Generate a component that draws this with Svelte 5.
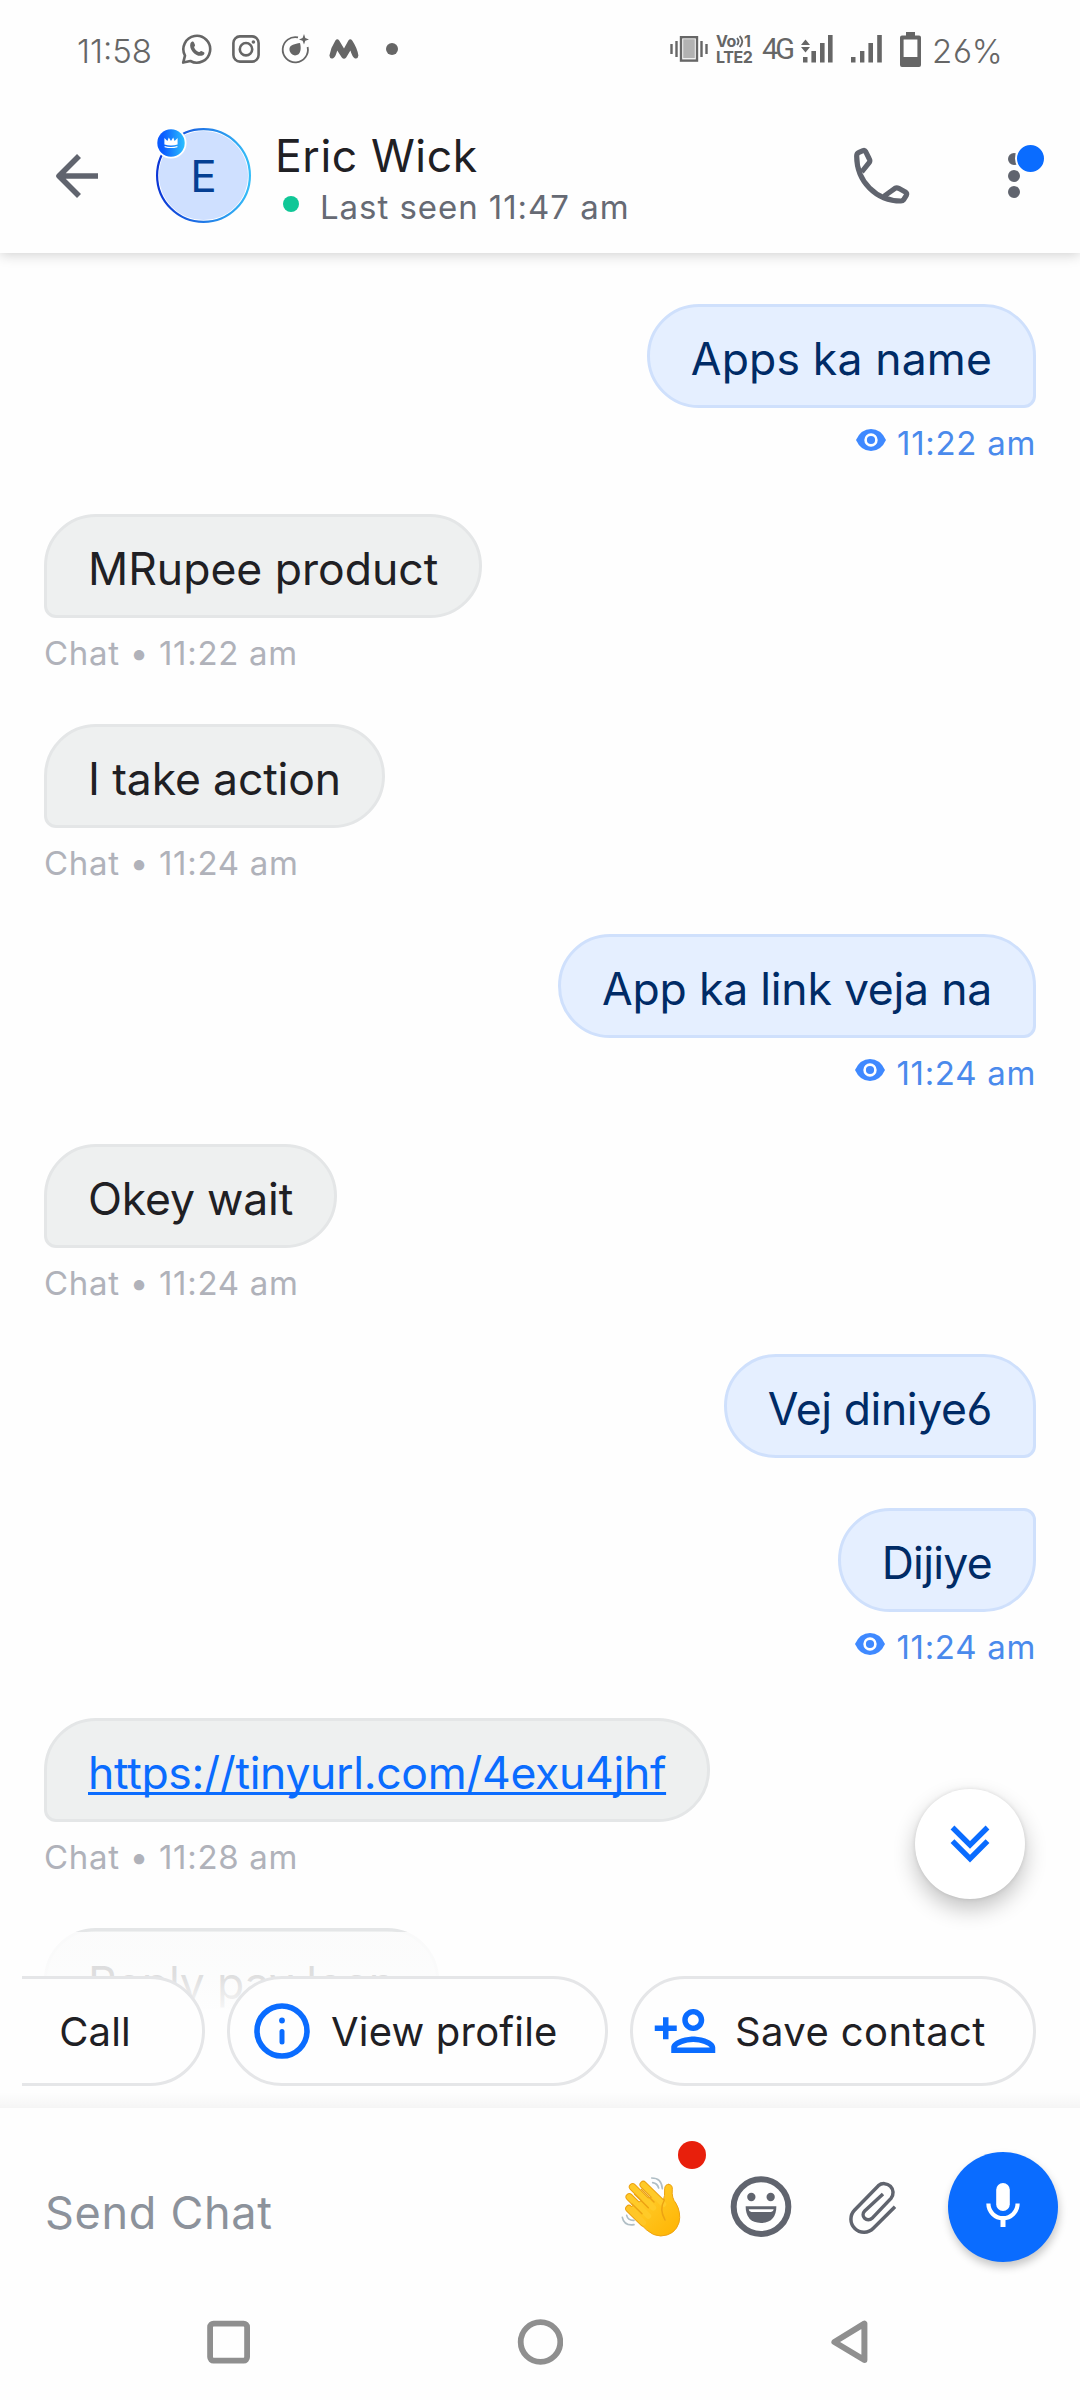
<script>
  let draft = '';

  // tracking is the letter spacing of the bubble text, in px
  const messages = [
    { id: 1, side: 'out', text: 'Apps ka name', time: '11:22 am', tracking: 0.15 },
    { id: 2, side: 'in', text: 'MRupee product', time: '11:22 am', tracking: 0 },
    { id: 3, side: 'in', text: 'I take action', time: '11:24 am', tracking: -0.15 },
    { id: 4, side: 'out', text: 'App ka link veja na', time: '11:24 am', tracking: -0.22 },
    { id: 5, side: 'in', text: 'Okey wait', time: '11:24 am', tracking: -0.2 },
    { id: 6, side: 'out', text: 'Vej diniye6', tracking: -0.4 },
    { id: 7, side: 'out', text: 'Dijiye', time: '11:24 am', grouped: true, tracking: -0.7 },
    { id: 8, side: 'in', text: 'https://tinyurl.com/4exu4jhf', time: '11:28 am', link: true, tracking: -0.32 },
    { id: 9, side: 'in', text: 'Reply pay loan', tracking: -0.1 }
  ];
</script>

<div class="screen">
  <div class="status">
    <span class="clock">11:58</span>
    <svg class="st-whatsapp" width="32" height="32" viewBox="0 0 32 32" fill="none" stroke="#666" stroke-width="2.6">
      <path d="M2.2 29.6 L4 22.6 A13.4 13.4 0 1 1 9.4 28 Z" stroke-linejoin="round" />
      <path d="M9.4 10.4 C10.5 8.4 12.2 8 13 9.4 L14 12 C14.4 13 12.8 13.8 13.2 14.6 C14 16.6 15.6 18.2 17.8 19 C18.8 19.4 19.4 17.6 20.4 18 L23 19.2 C24.2 20 23 22 21.4 22.6 C15 24.4 7.6 16.4 9.4 10.4 Z" fill="#666" stroke="none" />
    </svg>
    <svg class="st-insta" width="28" height="28" viewBox="0 0 28 28" fill="none" stroke="#666" stroke-width="2.6">
      <rect x="1.4" y="1.4" width="25.2" height="25.2" rx="6.5" />
      <circle cx="14" cy="14.2" r="6.2" />
      <circle cx="21.4" cy="7" r="1.8" fill="#666" stroke="none" />
    </svg>
    <svg class="st-drop" width="29" height="30" viewBox="0 0 29 30" fill="none">
      <path d="M17 3.4 A12.6 12.6 0 1 0 26.6 13" stroke="#666" stroke-width="1.8" />
      <path d="M19 9 C20.4 14 20.2 21.4 14 21.4 A6 6 0 0 1 8.4 15 C8.8 10.6 14 10 19 9 Z" fill="#666" />
      <path d="M23 0 L24.3 4 L28 5.4 L24.3 6.8 L23 10.6 L21.6 6.8 L18 5.4 L21.6 4 Z" fill="#666" />
    </svg>
    <svg class="st-m" width="30" height="20" viewBox="0 0 30 20">
      <path d="M6.4 1.6 Q8.2 -1 10.2 1.4 L15 9.4 L19.4 1.4 Q21.4 -1 23.2 1.6 Q28.2 9 29.4 16.6 Q29 20.4 25.6 19.2 Q23.4 18 21.4 11.4 L17.2 18.4 Q15 21 12.8 18.4 L8.2 11.4 Q6.6 18 4.2 19.2 Q0.8 20.4 0.4 16.6 Q1.6 9 6.4 1.6 Z" fill="#666" />
    </svg>
    <span class="st-dot"></span>
    <span class="spacer"></span>
    <svg class="st-vibrate" width="38" height="26" viewBox="0 0 38 26" fill="none" stroke="#666">
      <rect x="11.2" y="1.2" width="15.6" height="23" fill="#b2b2b2" stroke="#fff" stroke-width="4" />
      <rect x="11" y="1.2" width="16" height="23.4" stroke-width="2.4" />
      <path d="M1.5 8 V18 M6.5 5 V21 M31.5 5 V21 M36.5 8 V18" stroke-width="2.4" />
    </svg>
    <span class="volte"><span class="vo">Vo<svg width="8" height="13" viewBox="0 0 8 13" fill="none" stroke="#666" stroke-width="1.8"><path d="M1 3 Q4 6.5 1 10 M3.6 1 Q9 6.5 3.6 12" /></svg>1</span><span>LTE2</span></span>
    <span class="net">4G</span>
    <svg class="st-signal" width="32" height="28" viewBox="0 0 32 28" fill="#666">
      <path d="M0 10 L4.5 4.6 L9 10 Z M0 12 H9 L4.5 17.4 Z" />
      <path d="M2 22 H6.5 V27.4 H2 Z M10.4 16 H15 V27.4 H10.4 Z M19 8 H23.6 V27.4 H19 Z M27 0 H31.6 V27.4 H27 Z" />
    </svg>
    <svg class="st-signal2" width="31" height="28" viewBox="0 0 31 28" fill="#666">
      <path d="M0 22 H4.5 V27.4 H0 Z M9 16 H13.4 V27.4 H9 Z M17.4 8 H22 V27.4 H17.4 Z M26.2 0 H30.8 V27.4 H26.2 Z" />
    </svg>
    <svg class="st-battery" width="21" height="35" viewBox="0 0 21 35">
      <path fill="#666" fill-rule="evenodd" d="M6 0 H15 V3.4 H19 Q21 3.4 21 5.4 V33 Q21 35 19 35 H2 Q0 35 0 33 V5.4 Q0 3.4 2 3.4 H6 Z M3.6 7.4 V25 H17.4 V7.4 Z" />
    </svg>
    <span class="percent">26%</span>
  </div>

  <header>
    <svg class="back" width="46" height="46" viewBox="0 0 46 46" fill="none" stroke="#60646e" stroke-width="5.6">
      <path d="M25 3 L5 23 L25 43 M5 23 H44" stroke-linejoin="round" />
    </svg>
    <div class="avatar">
      <svg width="95" height="95" viewBox="0 0 95 95">
        <defs>
          <linearGradient id="ring" x1="0" y1="0" x2="1" y2="0">
            <stop offset="0" stop-color="#0a35d6" />
            <stop offset="1" stop-color="#36bdf8" />
          </linearGradient>
        </defs>
        <circle cx="47.5" cy="47.5" r="46.4" fill="#fff" stroke="url(#ring)" stroke-width="2.2" />
        <circle cx="47.5" cy="47.5" r="44.6" fill="#cfe0ff" />
      </svg>
      <span class="initial">E</span>
      <svg class="crown" width="32" height="32" viewBox="0 0 32 32">
        <defs>
          <linearGradient id="crown" x1="0" y1="0" x2="1" y2="0">
            <stop offset="0.2" stop-color="#0a5bff" />
            <stop offset="1" stop-color="#2bc0ff" />
          </linearGradient>
        </defs>
        <circle cx="16" cy="16" r="15.5" fill="#fff" />
        <circle cx="16" cy="16" r="13.7" fill="url(#crown)" />
        <path d="M9.4 11 L12.4 14 L13.8 10.4 L16 14 L18.2 10.4 L19.6 14 L22.6 11 V17.6 Q16 19.4 9.4 17.6 Z M9.6 19 Q16 20.8 22.4 19 V20.2 Q16 22 9.6 20.2 Z" fill="#fff" />
      </svg>
    </div>
    <div class="who">
      <div class="name">Eric Wick</div>
      <div class="seen"><span class="online"></span>Last seen 11:47 am</div>
    </div>
    <svg class="call" width="58" height="58" viewBox="160 141 174 174" fill="none" stroke="#60646e" stroke-width="15.5" stroke-linejoin="round">
      <path d="M171 168 Q171 160 178 157 L190 152 Q195 150 198 155 L209 177 Q212 182 209 187 L186 216" />
      <path d="M171 168 C171 245 230 303 304 303 Q309 303 312 299 L320 286 Q323 280 317 276 L297 265 Q291 262 286 265 L254 288" />
    </svg>
    <div class="more">
      <span></span><span></span><span></span>
      <i class="new"></i>
    </div>
  </header>

  <main>
    {#each messages as message (message.id)}
      <div class="message {message.side}">
        <div class="bubble" class:grouped={message.grouped} style="letter-spacing: {message.tracking}px">
          {#if message.link}
            <a href={message.text}>{message.text}</a>
          {:else}
            {message.text}
          {/if}
        </div>
        {#if message.time}
          <div class="meta">
            {#if message.side === 'out'}
              <svg width="30" height="22" viewBox="0 0 30 22">
                <path d="M0 11 Q5 0 15 0 Q25 0 30 11 Q25 22 15 22 Q5 22 0 11 Z" fill="#3f89ff" />
                <circle cx="15" cy="11" r="5.4" fill="none" stroke="#fff" stroke-width="2.6" />
              </svg>
              <span>{message.time}</span>
            {:else}
              <span>Chat • {message.time}</span>
            {/if}
          </div>
        {/if}
      </div>
    {/each}

    <div class="fade"></div>

    <button class="jump" aria-label="Scroll to latest">
      <svg width="40" height="40" viewBox="0 0 40 40" fill="none" stroke="#0a6cff" stroke-width="5.4">
        <path d="M2.5 3.5 L20 21 L37.5 3.5 M2.5 17.2 L20 34.7 L37.5 17.2" />
      </svg>
    </button>

    <div class="chips">
      <button class="chip chip-call">Call</button>
      <button class="chip chip-view">
        <svg width="56" height="56" viewBox="0 0 56 56" fill="none" stroke="#0a6cff">
          <circle cx="28" cy="28" r="25" stroke-width="5.6" />
          <path d="M28 28.5 V39" stroke-width="5" stroke-linecap="round" />
          <circle cx="28" cy="17.5" r="2.9" fill="#0a6cff" stroke="none" />
        </svg>
        View profile
      </button>
      <button class="chip chip-save">
        <svg width="66" height="66" viewBox="0 0 24 24" fill="#0a6cff">
          <path d="M15 12c2.21 0 4-1.79 4-4s-1.79-4-4-4-4 1.79-4 4 1.79 4 4 4zm0-6c1.1 0 2 .9 2 2s-.9 2-2 2-2-.9-2-2 .9-2 2-2zm0 8c-2.67 0-8 1.34-8 4v2h16v-2c0-2.66-5.33-4-8-4zm-6 4c.22-.72 3.31-2 6-2 2.7 0 5.8 1.29 6 2H9zm-3-3v-3h3v-2H6V7H4v3H1v2h3v3z" />
        </svg>
        Save contact
      </button>
    </div>
    <div class="edge"></div>
  </main>

  <footer>
    <input bind:value={draft} placeholder="Send Chat" />
    <div class="wave">
      <svg width="60" height="62" viewBox="63 230 180 186" fill="none" stroke-linecap="round">
        <defs>
          <linearGradient id="skin" x1="0" y1="0" x2="1" y2="1">
            <stop offset="0.3" stop-color="#ffca28" />
            <stop offset="1" stop-color="#ffb300" />
          </linearGradient>
        </defs>
        <path d="M98 263 L160 325 M88 293 L145 350 M87 328 L130 370 M130 256 L190 315" stroke="#eda313" stroke-width="23" />
        <path d="M206 255 Q218 256 217 270 Q214 296 228 312 Q244 340 237 370 Q225 408 182 410 Q160 410 140 392 L78 332 L130 300 L165 290 L190 302 Q195 292 194 268 Q195 255 206 255 Z" fill="url(#skin)" stroke="#eda313" stroke-width="3" />
        <path d="M130 256 L190 315" stroke="#ffca28" stroke-width="17" />
        <path d="M98 263 L160 325" stroke="#ffca28" stroke-width="17" />
        <path d="M88 293 L145 350" stroke="#ffca28" stroke-width="17" />
        <path d="M87 328 L130 370" stroke="#ffc628" stroke-width="17" />
        <path d="M124 270 L162 308 M104 285 L145 325 M96 314 L126 343" stroke="#eda313" stroke-width="4.5" />
        <path d="M193 302 Q177 330 195 362" stroke="#eda313" stroke-width="4.5" />
        <path d="M155 236 Q185 236 187 268 M158 250 Q172 252 176 266 M67 354 Q72 380 102 376 M80 348 Q84 364 102 363" stroke="#b0bec5" stroke-width="5" />
      </svg>
      <i class="alert"></i>
    </div>
    <svg class="smile" width="62" height="62" viewBox="390 229 186 186">
      <circle cx="483" cy="321" r="82" fill="none" stroke="#60646e" stroke-width="18" />
      <circle cx="454" cy="292" r="12.5" fill="#60646e" />
      <circle cx="512" cy="292" r="12.5" fill="#60646e" />
      <path d="M437 320 H529 Q529 369 483 370 Q437 369 437 320 Z" fill="#60646e" />
      <path d="M446 329 H521 Q520 337 513 337 H454 Q447 337 446 329 Z" fill="#fff" />
    </svg>
    <svg class="clip" width="52" height="57" viewBox="740 235 156 171" fill="none" stroke="#60646e" stroke-width="10.5">
      <path d="M884 318 L819 383 A39 39 0 0 1 763 328 L834 255 A27 27 0 0 1 872 293 L815 353 A15.5 15.5 0 0 1 793 331 L848 280" />
    </svg>
    <button class="mic" aria-label="Record">
      <svg width="34" height="46" viewBox="0 0 34 46" fill="none" stroke="#fff" stroke-width="4.2">
        <rect x="10.2" y="1" width="13.6" height="28" rx="6.8" fill="#fff" stroke="none" />
        <path d="M2.4 21.6 A14.6 14.6 0 0 0 31.6 21.6" />
        <path d="M17 36 V45" stroke-width="5" />
      </svg>
    </button>
  </footer>

  <nav>
    <svg width="46" height="46" viewBox="0 0 46 46" fill="none" stroke="#8f8f8f" stroke-width="5.8">
      <rect x="4.1" y="4.6" width="37" height="37" rx="3.5" />
    </svg>
    <svg width="46" height="46" viewBox="0 0 46 46" fill="none" stroke="#8f8f8f" stroke-width="5.8">
      <circle cx="23.5" cy="23" r="19.8" />
    </svg>
    <svg width="46" height="46" viewBox="0 0 46 46" fill="none" stroke="#8f8f8f" stroke-width="6" stroke-linejoin="round">
      <path d="M36.4 4.6 V41 L6.4 23 Z" />
    </svg>
  </nav>
</div>

<style>
  :global(body) {
    margin: 0;
    background: #fefefe;
  }
  .screen {
    width: 1080px;
    height: 2400px;
    display: flex;
    flex-direction: column;
    overflow: hidden;
    background: #fefefe;
    font-family: Inter, 'Liberation Sans', sans-serif;
    font-weight: 400;
    font-feature-settings: 'cv03';
    color: #1f2024;
  }
  svg {
    display: block;
    flex: none;
  }
  button {
    font: inherit;
    color: inherit;
    border: none;
    padding: 0;
  }
  .status {
    height: 98px;
    display: flex;
    align-items: center;
    color: #666;
    font-size: 33px;
    font-weight: 300;
    padding: 0 79px 0 77px;
    white-space: nowrap;
  }
  .clock {
    width: 104px;
    padding-top: 4px;
  }
  .st-insta {
    margin-left: 19px;
  }
  .st-drop {
    margin-left: 21px;
  }
  .st-m {
    margin-left: 19px;
  }
  .st-dot {
    width: 12px;
    height: 12px;
    margin-left: 27px;
    border-radius: 50%;
    background: #666;
  }
  .spacer {
    flex: 1;
  }
  .st-vibrate {
    margin-right: 8px;
  }
  .volte {
    width: 38px;
    margin-right: 8px;
    display: flex;
    flex-direction: column;
    font-size: 16px;
    line-height: 16px;
    font-weight: 700;
    letter-spacing: -0.4px;
  }
  .vo {
    display: flex;
    align-items: center;
  }
  .net {
    width: 39px;
    font: 400 29px/30px Roboto, sans-serif;
    letter-spacing: -3px;
  }
  .st-signal {
    margin-right: 18px;
  }
  .st-signal2 {
    margin-right: 18px;
  }
  .st-battery {
    margin-right: 11px;
  }
  .percent {
    width: 69px;
    padding-top: 4px;
    letter-spacing: 0.8px;
  }
  header {
    position: relative;
    z-index: 2;
    height: 155px;
    display: flex;
    align-items: center;
    background: #fefefe;
    box-shadow: 0 2px 12px rgba(0, 0, 0, 0.18);
    clip-path: inset(0 0 -20px 0);
    padding-left: 54px;
  }
  .avatar {
    position: relative;
    width: 95px;
    height: 95px;
    margin-left: 56px;
  }
  .initial {
    position: absolute;
    inset: 0;
    line-height: 96px;
    text-align: center;
    font-size: 44px;
    color: #053f93;
  }
  .crown {
    position: absolute;
    left: -1px;
    top: -1px;
  }
  .who {
    flex: 1;
    margin-left: 24px;
    padding-top: 8px;
  }
  .name {
    font-size: 44.5px;
    line-height: 54px;
    letter-spacing: 0.6px;
  }
  .seen {
    display: flex;
    align-items: center;
    font-size: 33px;
    line-height: 48px;
    letter-spacing: 0.95px;
    color: #666a74;
  }
  .online {
    width: 16px;
    height: 16px;
    margin: 0 21px 6px 8px;
    border-radius: 50%;
    background: #10c797;
  }
  .more {
    position: relative;
    width: 12px;
    height: 45px;
    margin: 0 60px 0 97px;
    display: flex;
    flex-direction: column;
    justify-content: space-between;
  }
  .more span {
    width: 12px;
    height: 12px;
    border-radius: 50%;
    background: #60646e;
  }
  .new {
    position: absolute;
    left: 7px;
    top: -10px;
    width: 27px;
    height: 27px;
    border: 2.5px solid #fefefe;
    border-radius: 50%;
    background: #0a6cff;
  }
  main {
    position: relative;
    height: 1804px;
    padding: 51px 44px 0;
    display: flex;
    flex-direction: column;
    gap: 50px;
    overflow: hidden;
  }
  .message {
    flex: none;
    display: flex;
    flex-direction: column;
    align-items: flex-start;
  }
  .out {
    align-items: flex-end;
  }
  .bubble {
    box-sizing: border-box;
    height: 104px;
    padding: 6px 41px 0;
    border: 3px solid #e4e6e7;
    border-radius: 52px 52px 52px 12px;
    background: #eef0f0;
    font-size: 44.5px;
    line-height: 93px;
    white-space: nowrap;
  }
  .out .bubble {
    border-color: #cfe0fc;
    border-radius: 52px 52px 12px 52px;
    background: #e5efff;
    color: #002b66;
  }
  .out .bubble.grouped {
    border-radius: 52px 12px 52px 52px;
  }
  .bubble a {
    color: #0a6cff;
    text-decoration-thickness: 3px;
    text-underline-offset: 3px;
    text-decoration-skip-ink: none;
  }
  .meta {
    display: flex;
    gap: 11px;
    margin-top: 15px;
    height: 41px;
    font-size: 33px;
    line-height: 41px;
    letter-spacing: 0.7px;
    color: #b0b2ba;
  }
  .meta svg {
    margin-top: 6px;
  }
  .out .meta {
    color: #4a8aec;
  }
  .fade {
    position: absolute;
    left: 0;
    right: 0;
    top: 1679px;
    bottom: 0;
    background: linear-gradient(rgba(254, 254, 254, 0.82), rgba(254, 254, 254, 0.86) 44px, rgba(254, 254, 254, 0.96) 76px, #fefefe 77px);
  }
  .jump {
    position: absolute;
    left: 915px;
    top: 1536px;
    width: 110px;
    height: 110px;
    display: flex;
    align-items: center;
    justify-content: center;
    border-radius: 50%;
    background: #fff;
    box-shadow: 0 10px 22px rgba(0, 0, 0, 0.24), 0 0 4px rgba(0, 0, 0, 0.1);
  }
  .chips {
    position: absolute;
    left: 22px;
    right: 44px;
    bottom: 22px;
    display: flex;
    justify-content: flex-end;
    gap: 22px;
    overflow: hidden;
  }
  .chip {
    box-sizing: border-box;
    flex: none;
    height: 110px;
    display: flex;
    align-items: center;
    border: 3px solid #e5e6e8;
    border-radius: 55px;
    background: #fefefe;
    font-size: 40px;
    letter-spacing: 0.2px;
    white-space: nowrap;
  }
  .chip-call {
    width: 290px;
    justify-content: flex-end;
    padding-right: 71px;
  }
  .chip-view {
    width: 381px;
    padding-left: 24px;
    gap: 21px;
  }
  .chip-save {
    width: 406px;
    padding-left: 19px;
    gap: 17px;
    letter-spacing: 0.4px;
  }
  .edge {
    position: absolute;
    left: 0;
    right: 0;
    bottom: 0;
    height: 16px;
    background: linear-gradient(rgba(0, 0, 0, 0), rgba(0, 0, 0, 0.035));
  }
  footer {
    height: 198px;
    display: flex;
    align-items: center;
    padding: 0 22px 0 45px;
  }
  input {
    flex: 1;
    min-width: 0;
    border: none;
    outline: none;
    background: none;
    padding: 10px 0 0;
    font: inherit;
    font-size: 45px;
    letter-spacing: 0.7px;
    color: #1f2024;
  }
  input::placeholder {
    color: #8c929b;
    opacity: 1;
  }
  .wave {
    position: relative;
  }
  .alert {
    position: absolute;
    left: 57px;
    top: -35px;
    width: 28px;
    height: 28px;
    border-radius: 50%;
    background: #e81f0c;
  }
  .smile {
    margin-left: 49px;
  }
  .clip {
    margin-left: 55px;
  }
  .mic {
    width: 110px;
    height: 110px;
    margin-left: 49px;
    display: flex;
    align-items: center;
    justify-content: center;
    border-radius: 50%;
    background: #0a6cff;
    box-shadow: 1px 5px 9px rgba(0, 0, 0, 0.22);
  }
  .mic svg {
    margin-top: -4px;
  }
  nav {
    display: flex;
    justify-content: space-between;
    padding: 13px 206px 0;
  }
</style>
